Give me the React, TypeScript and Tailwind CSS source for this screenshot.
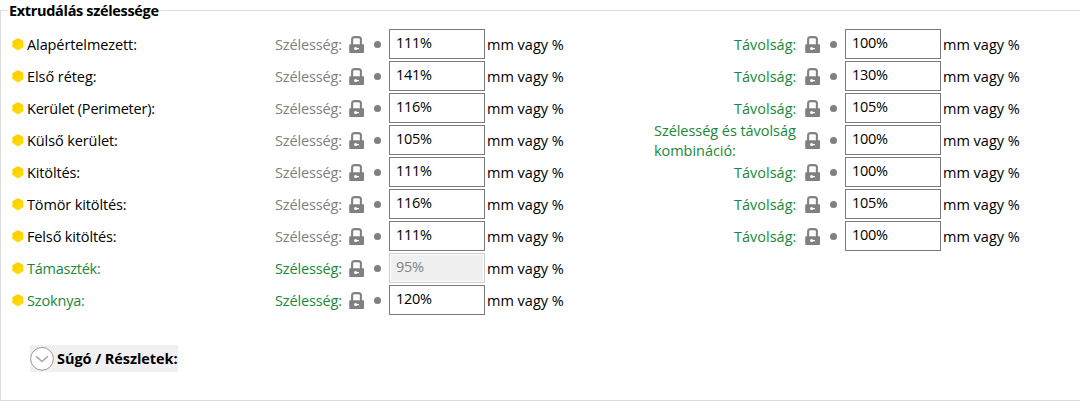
type Row = {
  label: string;
  tracking: string;
  width: string;
  green?: boolean;
  disabled?: boolean;
  spacing?: string;
  combined?: boolean;
};

const rows: Row[] = [
  { label: "Alapértelmezett:", tracking: "tracking-[-0.1px]", width: "111%", spacing: "100%" },
  { label: "Első réteg:", tracking: "tracking-[-0.06px]", width: "141%", spacing: "130%" },
  { label: "Kerület (Perimeter):", tracking: "tracking-[-0.22px]", width: "116%", spacing: "105%" },
  { label: "Külső kerület:", tracking: "tracking-[-0.1px]", width: "105%", spacing: "100%", combined: true },
  { label: "Kitöltés:", tracking: "tracking-[-0.12px]", width: "111%", spacing: "100%" },
  { label: "Tömör kitöltés:", tracking: "tracking-[-0.13px]", width: "116%", spacing: "105%" },
  { label: "Felső kitöltés:", tracking: "tracking-[-0.14px]", width: "111%", spacing: "100%" },
  { label: "Támaszték:", tracking: "tracking-[-0.24px]", width: "95%", green: true, disabled: true },
  { label: "Szoknya:", tracking: "tracking-[-0.17px]", width: "120%", green: true },
];

function Hexagon() {
  return (
    <svg className="ml-3 h-[13px] w-[12px] shrink-0" viewBox="0 0 12 13">
      <path d="M6 .3 11.4 3.3V9.3L6 12.4.6 9.3V3.3Z" fill="#ffd900" />
      <path d="M.6 9.3V3.3L6 .3 11.4 3.3Z" fill="#fdd000" />
    </svg>
  );
}

function Lock() {
  return (
    <svg className="h-[18px] w-[16px] shrink-0" viewBox="0 0 16 18">
      <path d="M3.1 10V4.6Q3.1 2.1 5.6 2.1H9.4Q11.9 2.1 11.9 4.6V10" fill="none" stroke="#808080" strokeWidth="2.1" />
      <rect x="0.2" y="9.2" width="14.8" height="8.7" rx="0.9" fill="#808080" />
      <circle cx="6.6" cy="13.6" r="1.5" fill="#fff" />
      <path d="M7 13h3v1.3H7z" fill="#fff" />
    </svg>
  );
}

function Field({ value, disabled }: { value: string; disabled?: boolean }) {
  return (
    <>
      <Lock />
      <span className="ml-[9px] size-[7px] shrink-0 rounded-full bg-[#808080]" />
      <div
        className={`ml-2 flex h-[30px] w-24 shrink-0 items-center border pb-[3px] pl-[6px] ${
          disabled ? "border-[#cccccc] bg-[#f0f0f0] text-[#808080] shadow-[inset_0_0_0_1px_#fff]" : "border-[#7a7a7a] bg-white"
        }`}
      >
        <span className="tracking-[-0.25px]">{value}</span>
      </div>
      <span className="ml-[2px] pt-0.5">mm vagy %</span>
    </>
  );
}

export default function App() {
  return (
    <main className="h-[402px] w-[1080px] overflow-hidden bg-white font-['Open_Sans','Noto_Sans',sans-serif] text-[14.5px] leading-5 whitespace-nowrap text-black">
      <div className="flex h-[21px] items-center">
        <span className="mt-px h-[11px] w-[7px] self-end border-t border-l border-[#dcdcdc]" />
        <h1 className="w-[154px] shrink-0 pl-[2px] font-bold tracking-[-0.33px]">Extrudálás szélessége</h1>
        <span className="h-[11px] flex-1 self-end border-t border-[#dcdcdc]" />
      </div>
      <section className="h-[380px] border-b border-l border-[#dcdcdc] pt-[7px]">
        {rows.map((row) => (
          <div key={row.label} className="-ml-px flex h-8 items-center">
            <Hexagon />
            <span className={`ml-[3px] w-[248px] shrink-0 pt-0.5 ${row.tracking} ${row.green ? "text-[#1b8838]" : ""}`}>
              {row.label}
            </span>
            <span className={`w-[74px] shrink-0 pt-0.5 tracking-[-0.13px] ${row.green ? "text-[#1b8838]" : "text-[#808080]"}`}>
              Szélesség:
            </span>
            <Field value={row.width} disabled={row.disabled} />
            {row.spacing && (
              <div className="ml-auto flex w-[426px] items-center">
                {row.combined ? (
                  <span className="-my-2 w-[151px] shrink-0 pt-0.5 tracking-[-0.05px] text-[#1b8838]">
                    Szélesség és távolság
                    <br />
                    kombináció:
                  </span>
                ) : (
                  <span className="w-[151px] shrink-0 pt-0.5 pl-20 text-[#1b8838]">Távolság:</span>
                )}
                <Field value={row.spacing} />
              </div>
            )}
          </div>
        ))}
        <button className="mt-[29px] ml-[29px] flex h-[27px] w-[148px] items-center bg-[#f0f0f0] font-bold">
          <svg className="size-6 shrink-0" viewBox="0 0 24 24">
            <circle cx="12" cy="11.8" r="11.4" fill="#fff" stroke="#999" />
            <path d="m6.2 9.3 5.8 5.2 5.8-5.2" fill="none" stroke="#aaa" strokeWidth="1.6" />
          </svg>
          <span className="ml-[3px] tracking-[-0.06px]">Súgó / Részletek:</span>
        </button>
      </section>
    </main>
  );
}
